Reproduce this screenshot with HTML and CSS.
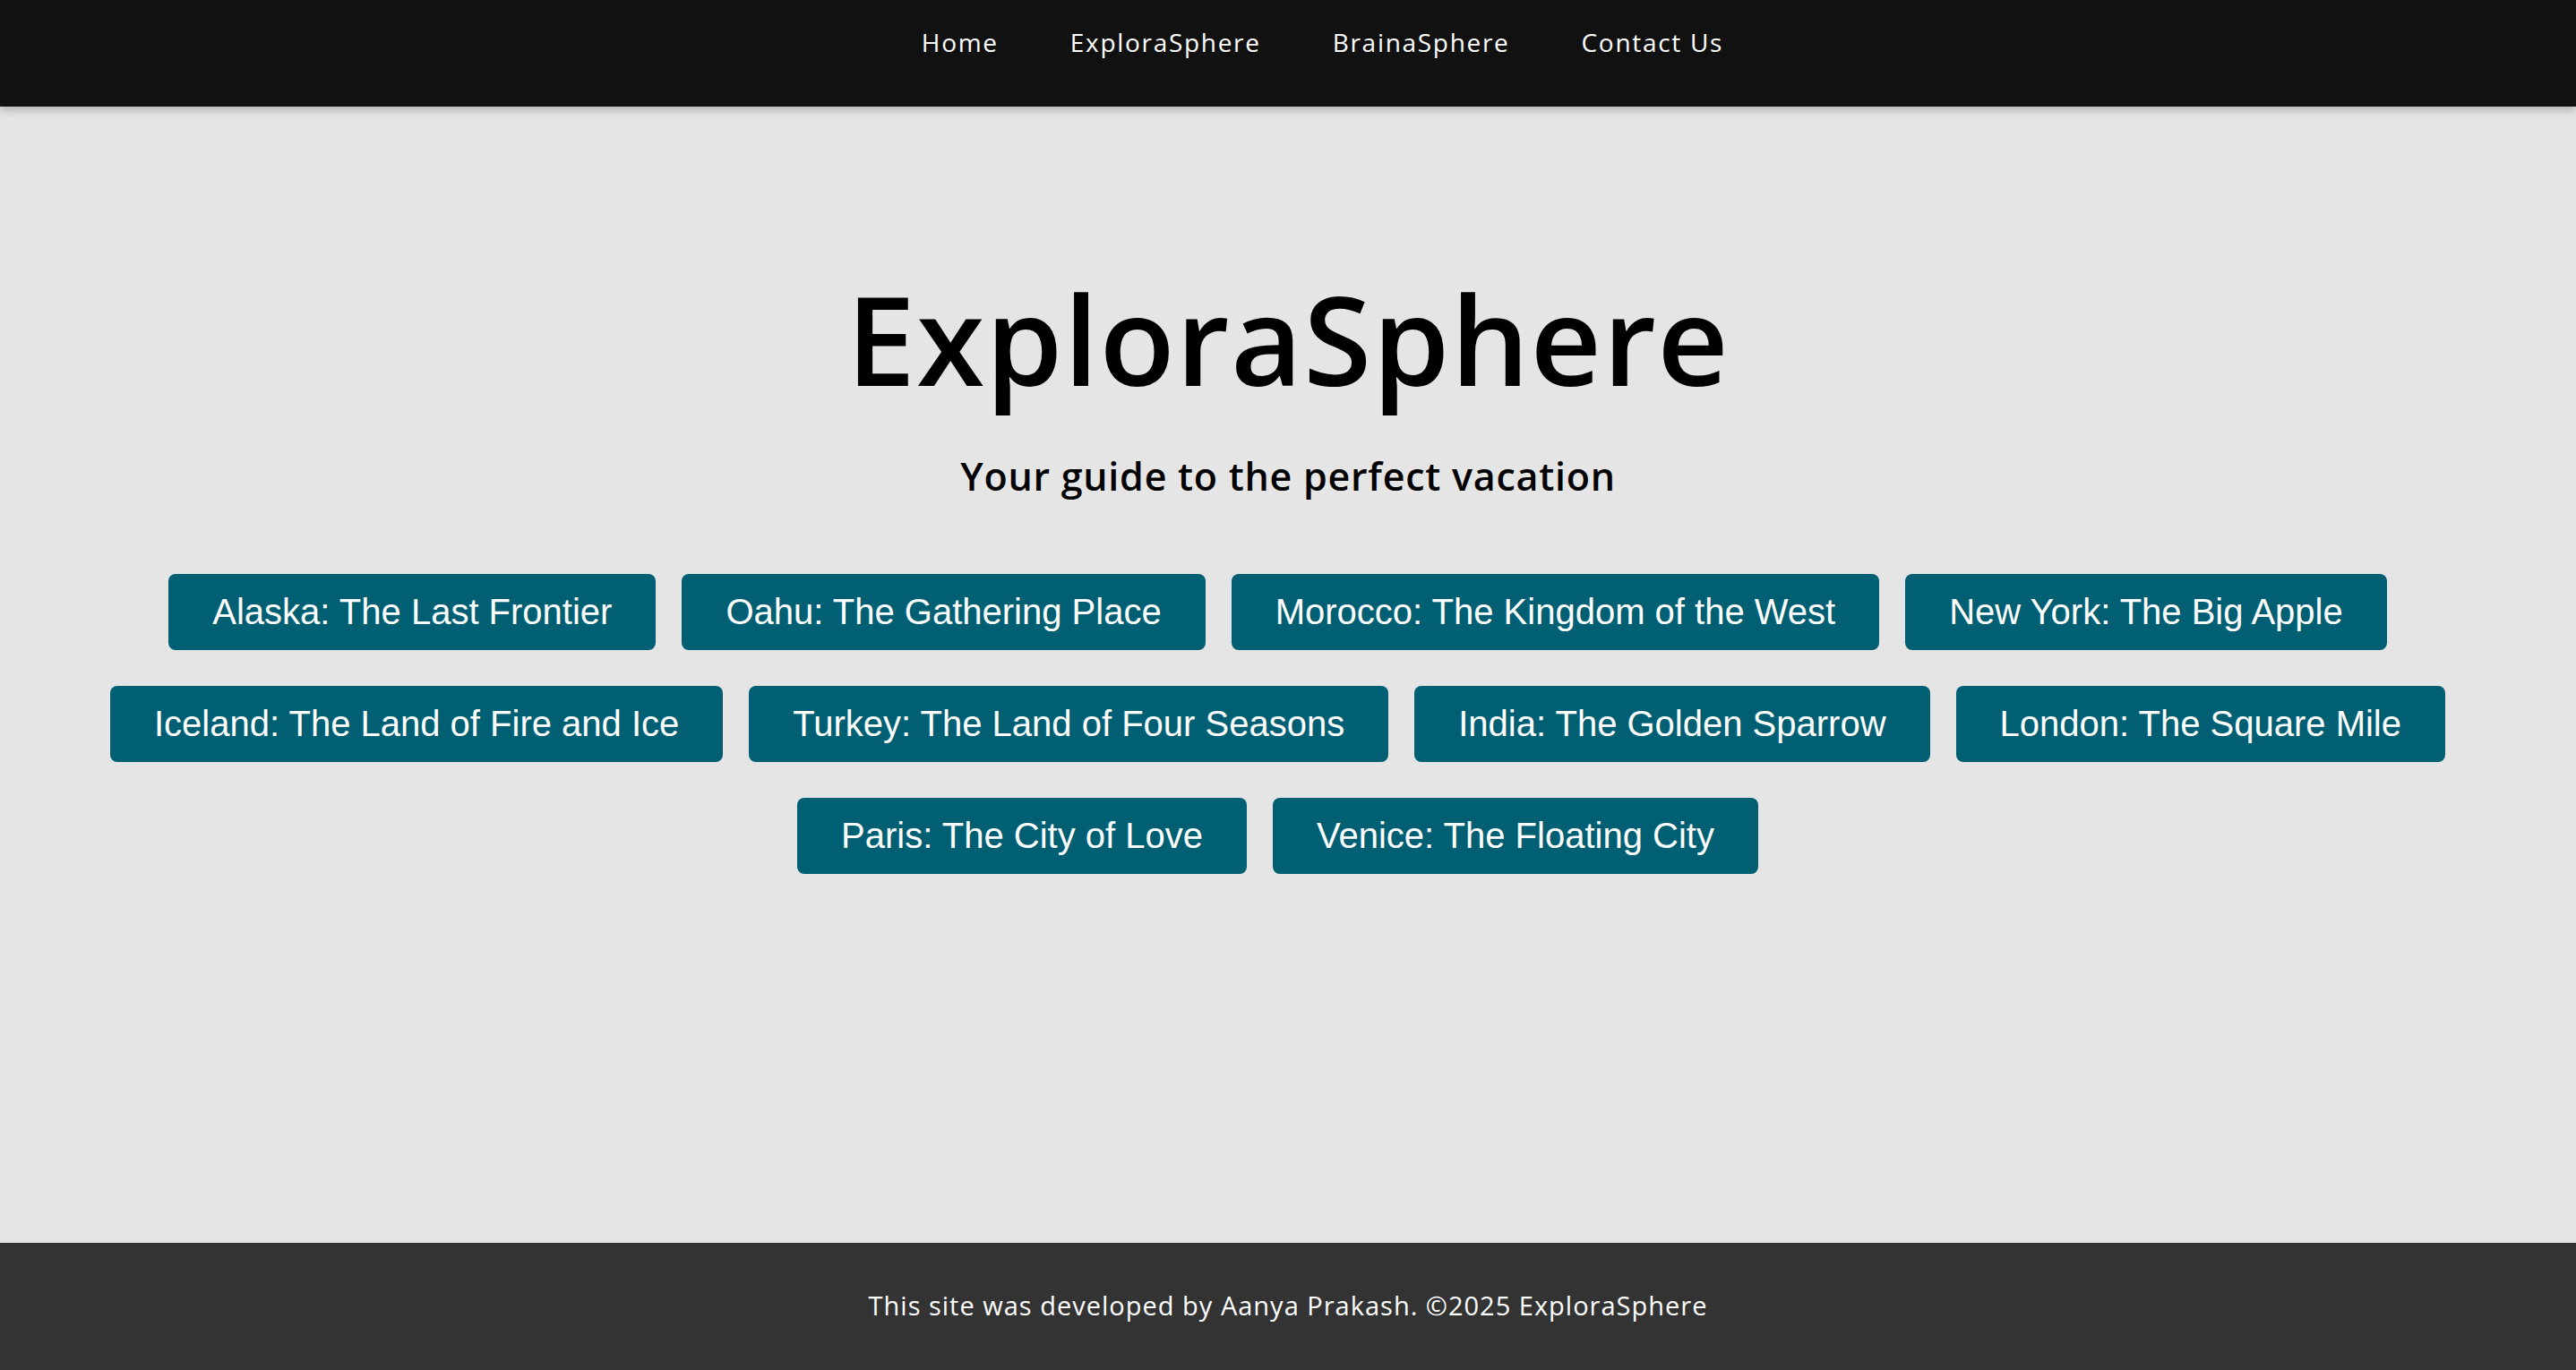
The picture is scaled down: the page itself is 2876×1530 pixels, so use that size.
FILE: index.html
```html
<!DOCTYPE html>
<html lang="en">
<head>
<meta charset="utf-8">
<title>ExploraSphere</title>
<link rel="stylesheet" href="styles.css">
</head>
<body>
<header class="topbar">
  <nav class="nav">
    <a class="nav-link" href="#">Home</a>
    <a class="nav-link" href="#">ExploraSphere</a>
    <a class="nav-link" href="#">BrainaSphere</a>
    <a class="nav-link" href="#">Contact Us</a>
  </nav>
</header>
<main class="main">
  <h1 class="title">ExploraSphere</h1>
  <p class="subtitle">Your guide to the perfect vacation</p>
  <div class="places">
    <button class="place">Alaska: The Last Frontier</button>
    <button class="place">Oahu: The Gathering Place</button>
    <button class="place">Morocco: The Kingdom of the West</button>
    <button class="place">New York: The Big Apple</button>
    <button class="place">Iceland: The Land of Fire and Ice</button>
    <button class="place">Turkey: The Land of Four Seasons</button>
    <button class="place">India: The Golden Sparrow</button>
    <button class="place">London: The Square Mile</button>
    <button class="place">Paris: The City of Love</button>
    <button class="place">Venice: The Floating City</button>
  </div>
</main>
<footer class="footer">
  <p class="footer-text">This site was developed by Aanya Prakash. ©2025 ExploraSphere</p>
</footer>
</body>
</html>
```

FILE: styles.css
```css
* {
  box-sizing: border-box;
}

html, body {
  margin: 0;
  padding: 0;
}

body {
  min-height: 100vh;
  display: flex;
  flex-direction: column;
  background: #e5e5e5;
  font-family: "Open Sans", "Liberation Sans", sans-serif;
  color: #000;
}

.topbar {
  position: relative;
  z-index: 2;
  height: 119px;
  background: #111111;
  box-shadow: 0 3px 10px rgba(0, 0, 0, 0.28);
}

.nav {
  display: flex;
  justify-content: center;
  gap: 80px;
  padding: 28px 0 0 77px;
}

.nav-link {
  color: #ffffff;
  text-decoration: none;
  font-size: 28px;
  line-height: 38px;
  letter-spacing: 1.7px;
}

.main {
  flex: 1;
  display: flex;
  flex-direction: column;
  align-items: center;
  padding-top: 189px;
}

.title {
  margin: 0;
  font-size: 138px;
  line-height: 138px;
  font-weight: 600;
  letter-spacing: 1.3px;
}

.subtitle {
  margin: 64px 0 0;
  font-size: 43px;
  line-height: 43px;
  font-weight: 600;
  letter-spacing: 0.75px;
}

.places {
  margin-top: 88px;
  width: 100%;
  display: flex;
  flex-wrap: wrap;
  justify-content: center;
  gap: 40px 29px;
  padding: 0 23px 0 0;
}

.place {
  font-family: "Liberation Sans", Arial, sans-serif;
  font-size: 40px;
  line-height: 45px;
  padding: 20px 49px;
  color: #ffffff;
  background: #005f73;
  border: none;
  border-radius: 8px;
}

.footer {
  height: 142px;
  background: #333333;
  padding-top: 51px;
}

.footer-text {
  margin: 0;
  text-align: center;
  color: #ffffff;
  font-size: 29px;
  line-height: 38px;
  letter-spacing: 1px;
}
```
